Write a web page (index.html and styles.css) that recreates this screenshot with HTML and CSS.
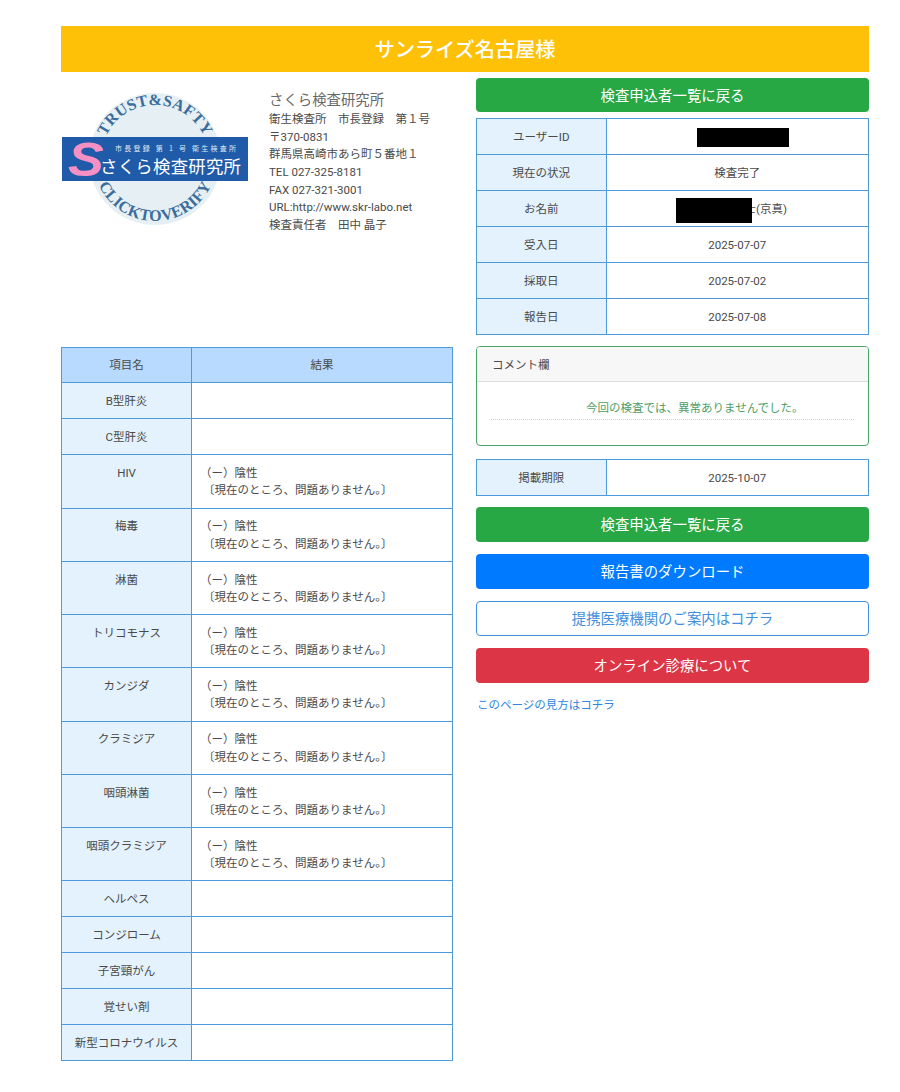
FILE: index.html
```html
<!DOCTYPE html>
<html lang="ja">
<head>
<meta charset="utf-8">
<title>検査結果</title>
<link rel="stylesheet" href="styles.css">
</head>
<body>
<main class="page">
  <h1 class="banner">サンライズ名古屋様</h1>
  <div class="columns">
    <div class="col-left">
      <section class="company">
        <svg class="logo" viewBox="0 0 186 140" width="186" height="140" role="img" aria-label="さくら検査研究所">
          <defs>
            <path id="arc-top" d="M 39 69 A 54 54 0 0 1 147 69"/>
            <path id="arc-bottom" d="M 31 69 A 62 62 0 0 0 155 69"/>
          </defs>
          <circle cx="93" cy="69" r="66" fill="#e6f0f4"/>
          <text class="arc-text"><textPath href="#arc-top" startOffset="50%" text-anchor="middle">TRUST&amp;SAFTY</textPath></text>
          <text class="arc-text"><textPath href="#arc-bottom" startOffset="50%" text-anchor="middle">CLICKTOVERIFY</textPath></text>
          <rect x="0" y="47" width="186" height="44" fill="#1f5ba8"/>
          <text class="logo-s" x="0" y="0" transform="translate(6 86) scale(1.12 1)">S</text>
          <text class="logo-small" x="53" y="61" textLength="121">市長登録 第 1 号 衛生検査所</text>
          <text class="logo-name" x="38" y="83" textLength="141">さくら検査研究所</text>
        </svg>
        <div class="company-text">
          <div class="company-name">さくら検査研究所</div>
          <div>衛生検査所　市長登録　第１号</div>
          <div>〒370-0831</div>
          <div>群馬県高崎市あら町５番地１</div>
          <div>TEL 027-325-8181</div>
          <div>FAX 027-321-3001</div>
          <div>URL:http://www.skr-labo.net</div>
          <div>検査責任者　田中 晶子</div>
        </div>
      </section>
      <table class="grid results">
        <thead>
          <tr><th class="head">項目名</th><th class="head">結果</th></tr>
        </thead>
        <tbody>
          <tr><th>B型肝炎</th><td></td></tr>
          <tr><th>C型肝炎</th><td></td></tr>
          <tr><th>HIV</th><td>（ー）陰性<br>〔現在のところ、問題ありません。〕</td></tr>
          <tr><th>梅毒</th><td>（ー）陰性<br>〔現在のところ、問題ありません。〕</td></tr>
          <tr><th>淋菌</th><td>（ー）陰性<br>〔現在のところ、問題ありません。〕</td></tr>
          <tr><th>トリコモナス</th><td>（ー）陰性<br>〔現在のところ、問題ありません。〕</td></tr>
          <tr><th>カンジダ</th><td>（ー）陰性<br>〔現在のところ、問題ありません。〕</td></tr>
          <tr><th>クラミジア</th><td>（ー）陰性<br>〔現在のところ、問題ありません。〕</td></tr>
          <tr><th>咽頭淋菌</th><td>（ー）陰性<br>〔現在のところ、問題ありません。〕</td></tr>
          <tr><th>咽頭クラミジア</th><td>（ー）陰性<br>〔現在のところ、問題ありません。〕</td></tr>
          <tr><th>ヘルペス</th><td></td></tr>
          <tr><th>コンジローム</th><td></td></tr>
          <tr><th>子宮頸がん</th><td></td></tr>
          <tr><th>覚せい剤</th><td></td></tr>
          <tr><th>新型コロナウイルス</th><td></td></tr>
        </tbody>
      </table>
    </div>
    <div class="col-right">
      <a class="btn btn-green btn-first">検査申込者一覧に戻る</a>
      <table class="grid info">
        <tr><th>ユーザーID</th><td class="id-cell"><span class="redact redact-id"></span></td></tr>
        <tr><th>現在の状況</th><td>検査完了</td></tr>
        <tr><th>お名前</th><td class="name-cell"><span class="redact redact-name"></span>士(京真)</td></tr>
        <tr><th>受入日</th><td>2025-07-07</td></tr>
        <tr><th>採取日</th><td>2025-07-02</td></tr>
        <tr><th>報告日</th><td>2025-07-08</td></tr>
      </table>
      <section class="comment">
        <div class="comment-head">コメント欄</div>
        <div class="comment-body">
          <p class="comment-text">今回の検査では、異常ありませんでした。</p>
        </div>
      </section>
      <table class="grid info expiry">
        <tr><th>掲載期限</th><td>2025-10-07</td></tr>
      </table>
      <div class="actions">
        <a class="btn btn-green">検査申込者一覧に戻る</a>
        <a class="btn btn-blue">報告書のダウンロード</a>
        <a class="btn btn-outline">提携医療機関のご案内はコチラ</a>
        <a class="btn btn-red">オンライン診療について</a>
      </div>
      <a class="help-link">このページの見方はコチラ</a>
    </div>
  </div>
</main>
</body>
</html>
```
FILE: styles.css
```css
* { box-sizing: border-box; }
html, body { margin: 0; padding: 0; background: #fff; }
body {
  font-family: Roboto, "Noto Sans CJK JP", sans-serif;
  font-size: 11.5px;
  line-height: 17.25px;
  color: #4a4a4a;
}
.page { width: 808px; margin: 0 0 0 61px; padding-top: 26px; }
.banner {
  margin: 0;
  height: 46px;
  background: #ffc107;
  color: #fff;
  font-size: 20.2px;
  font-weight: 500;
  line-height: 48px;
  text-align: center;
}
.columns { display: flex; gap: 23px; padding-top: 6px; }
.col-left { width: 392px; flex: none; }
.col-right { width: 393px; flex: none; }
.company { height: 268.5px; display: flex; gap: 21px; }
.logo { flex: none; margin: 12px 0 0 1px; }
.arc-text { font-family: "Liberation Serif", serif; font-weight: 700; font-size: 16px; letter-spacing: .3px; fill: #3a6c9c; }
.logo-s { font-family: "Liberation Sans", sans-serif; font-weight: 700; font-style: italic; font-size: 48px; fill: #f68fc3; }
.logo-small { font-family: "Noto Sans CJK JP", sans-serif; font-size: 7px; fill: #dfe9f5; }
.logo-name { font-family: "Noto Sans CJK JP", sans-serif; font-size: 17.4px; fill: #fff; }
.company-text { padding-top: 13px; line-height: 17.67px; }
.company-name { font-size: 14.4px; line-height: 20px; color: #6a6a6a; }
.grid { border-collapse: collapse; table-layout: fixed; width: 100%; }
.grid th, .grid td {
  border: 1px solid #4c9bdc;
  padding: 9.77px 0 7.97px;
  font-weight: 400;
  text-align: center;
  vertical-align: top;
}
.grid th { width: 130px; background: #e3f2fd; }
.grid th.head { background: #b8daff; }
.grid th.head + th.head { width: auto; }
.results td { text-align: left; padding-left: 11px; text-indent: -3px; }
.info { margin-top: 6px; }
.info th, .info td { padding: 10.3px 0 7.44px; }
.info th { width: 129.5px; }
.redact { display: inline-block; background: #000; vertical-align: middle; position: relative; }
.redact-id { width: 92px; height: 19px; margin: -3px 0 -1px; }
.redact-name { width: 76px; height: 25px; margin: -5px -7px -5px 0; }
.grid .id-cell { padding-left: 11px; }
.grid .name-cell { padding-right: 12px; }
.comment {
  margin-top: 11.5px;
  height: 100px;
  border: 1px solid #4aa564;
  border-radius: 4px;
  overflow: hidden;
}
.comment-head {
  height: 35px;
  padding: 10px 15px 8px;
  background: #f7f7f7;
  border-bottom: 1px solid #dcdcdc;
}
.comment-body { padding: 17.5px 14px 0; }
.comment-text {
  margin: 0;
  padding: 0 0 2px 95px;
  color: #4f9d63;
  border-bottom: 1px dotted #cfcfcf;
}
.expiry { margin-top: 12.5px; }
.btn {
  display: block;
  height: 35px;
  border-radius: 4px;
  border: 1px solid transparent;
  font-size: 14.4px;
  line-height: 36px;
  text-align: center;
  color: #fff;
}
.btn-first { height: 34px; line-height: 35px; }
.btn-green { background: #28a745; }
.btn-blue { background: #007bff; }
.btn-red { background: #dc3545; }
.btn-outline { background: #fff; border-color: #3f8fdc; color: #3f8fdc; }
.actions { margin-top: 11.5px; display: flex; flex-direction: column; gap: 12px; }
.help-link { display: block; margin-top: 14px; color: #2f86dd; padding-left: 1px; }
```
